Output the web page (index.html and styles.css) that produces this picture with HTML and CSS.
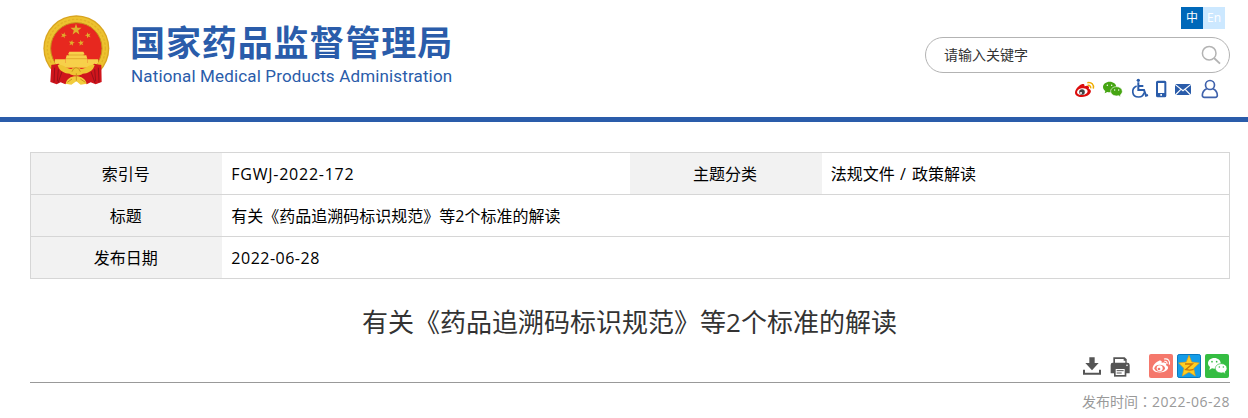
FILE: index.html
```html
<!DOCTYPE html>
<html lang="zh-CN">
<head>
    <meta charset="UTF-8">
    <meta name="viewport" content="width=device-width, initial-scale=1.0">
    <title>有关《药品追溯码标识规范》等2个标准的解读</title>
    <link rel="stylesheet" href="styles.css">
</head>
<body>
    <header class="header">
        <div class="logo">
            <svg class="emblem" viewBox="39 27 201 216">
                <defs>
                    <path id="star" d="M0-10L2.35-3.24 9.51-3.09 3.8 1.24 5.88 8.09 0 4-5.88 8.09-3.8 1.24-9.51-3.09-2.35-3.24z"/>
                </defs>
                <circle cx="139" cy="130" r="99" fill="#d9a520"/>
                <circle cx="139" cy="130" r="95" fill="#edc22f"/>
                <circle cx="139" cy="130" r="87" fill="none" stroke="#e2b226" stroke-width="4" stroke-dasharray="7 5"/>
                <circle cx="139" cy="130" r="77" fill="#e7281f" stroke="#c8921c" stroke-width="3"/>
                <g fill="#dfb02c">
                    <use href="#star" transform="translate(138 74) scale(1.75)"/>
                    <use href="#star" transform="translate(101 91) rotate(18) scale(.95)"/>
                    <use href="#star" transform="translate(174 91) rotate(-18) scale(.95)"/>
                    <use href="#star" transform="translate(125 114) rotate(10) scale(.95)"/>
                    <use href="#star" transform="translate(153 114) rotate(-10) scale(.95)"/>
                </g>
                <path d="M118 140h42l4 8h-3v3h8l3 11v12h31l-9 14H85l-10-14h32v-12l3-11h7v-3h-3z" fill="#f7d04a"/>
                <path d="M75 163h32v11H75zM172 163h32v11h-32z" fill="#f7d04a"/>
                <path d="M114 150h50M108 161h63" stroke="#d99a22" stroke-width="2"/>
                <path d="M64 180l22-4c8 14 24 19 52 19s46-5 54-19l22 4 1 51-18 7-15-6-12 6-20-20h-24l-20 20-14-6-12 6-19-7z" fill="#d0151c"/>
                <path d="M74 188l-2 44M85 193l-3 36M96 200l-12 34M205 188l2 44M194 193l3 36M183 200l12 34" stroke="#98101a" stroke-width="3"/>
                <path d="M83 180c18-4 29 15 42 12 5-6 22-6 27 0 13 3 24-16 42-12-4 18-22 26-36 26-5 7-34 7-39 0-14 0-32-8-36-26z" fill="#efc534"/>
                <path d="M107 236c3-14 15-22 31-22s29 8 32 22l-18 3-13-10-15 10z" fill="#f2cc3c"/>
                <path d="M126 200l5-9 7-3 8 3 5 9M112 232l14-10M166 232l-15-10M139 205v22" stroke="#cc921c" stroke-width="3" fill="none"/>
            </svg>
            <div class="logo-text">
                <div class="logo-cn">国家药品监督管理局</div>
                <div class="logo-en">National Medical Products Administration</div>
            </div>
        </div>

        <div class="tools">
            <div class="lang">
                <a class="lang-item active">中</a>
                <a class="lang-item">En</a>
            </div>
            <div class="search">
                <span>请输入关键字</span>
                <svg width="20" height="20" viewBox="0 0 20 20" fill="none" stroke="#b3b3b3">
                    <circle cx="8.2" cy="8.2" r="6.8" stroke-width="1.5"/>
                    <path d="M13 13l6 5.6" stroke-width="1.8"/>
                </svg>
            </div>
            <div class="links">
                <svg class="weibo" width="21" height="21" viewBox="462 234 63 63">
                    <path d="M485 253c6-3 10 0 8 6 9-4 17-1 13 7 9 3 8 11 2 17-10 10-34 11-41 1-7-9 6-26 18-31z" fill="#dc0d0d"/>
                    <ellipse cx="487" cy="275" rx="16" ry="10" transform="rotate(-8 487 275)" fill="#fff"/>
                    <circle cx="486" cy="276" r="8.500" fill="#444"/>
                    <circle cx="483" cy="279" r="3" fill="#fff"/>
                    <path d="M502 248c12-3 21 6 18 18M503 256c6-1 10 3 9 9" stroke="#f0ad00" stroke-width="4.500" fill="none"/>
                </svg>
                <svg class="wechat" width="21" height="21" viewBox="546 234 63 63">
                    <path d="M569 245c11 0 20 7 20 16s-9 16-20 16c-3 0-5 0-7-1l-8 4 2-7c-4-3-7-7-7-12 0-9 9-16 20-16z" fill="#46a512"/>
                    <path d="M590 260c-10 0-18 6-18 14s8 14 18 14l6-1 6 4-1-6c4-3 6-7 6-11 0-8-7-14-17-14z" fill="#46a512" stroke="#fff" stroke-width="2"/>
                    <g fill="#fff"><circle cx="562" cy="256" r="2.200"/><circle cx="575" cy="256" r="2.200"/><circle cx="584" cy="270" r="2"/><circle cx="596" cy="270" r="2"/></g>
                </svg>
                <svg class="wheelchair" width="18" height="21" viewBox="633 234 54 63" fill="none" stroke="#2a5caa" stroke-width="6">
                    <circle cx="655" cy="241" r="5" fill="#2a5caa" stroke="none"/>
                    <path d="M655 247v23h17l6 17 6-2M655 258h15"/>
                    <path d="M650 258c-17 7-16 33 6 33 9 0 15-6 16-13" stroke-width="5"/>
                </svg>
                <svg class="phone" width="12" height="21" viewBox="705 234 36 63">
                    <path fill="#2a5caa" fill-rule="evenodd" d="M713 242h21q5 0 5 5v40q0 5-5 5h-21q-5 0-5-5v-40q0-5 5-5zm1 7v30h19v-30zm7 33v5h5v-5z"/>
                </svg>
                <svg class="mail" width="18" height="21" viewBox="762 234 54 63">
                    <path d="M765 252h48v33h-48z" fill="#2a5caa"/>
                    <path d="M765 253l24 19 24-19M766 285l16-16M812 285l-16-16" stroke="#fff" stroke-width="3.500" fill="none"/>
                </svg>
                <svg class="user" width="18" height="21" viewBox="843 234 54 63" fill="none" stroke="#3f62ac" stroke-width="5">
                    <circle cx="870" cy="255" r="13.500"/>
                    <path d="M860 266c-8 4-13 11-13 20q0 6 6 6h33q6 0 6-6c0-9-5-16-13-20"/>
                </svg>
            </div>
        </div>
    </header>

    <main class="container">
        <table class="info">
            <tr>
                <th>索引号</th>
                <td class="code">FGWJ-2022-172</td>
                <th>主题分类</th>
                <td>法规文件<span class="slash"> / </span>政策解读</td>
            </tr>
            <tr>
                <th>标题</th>
                <td colspan="3">有关《药品追溯码标识规范》等2个标准的解读</td>
            </tr>
            <tr>
                <th>发布日期</th>
                <td colspan="3" class="num">2022-06-28</td>
            </tr>
        </table>

        <h1>有关《药品追溯码标识规范》等2个标准的解读</h1>

        <div class="share">
            <svg class="download" width="20" height="24" viewBox="36 27 60 72" fill="#555">
                <path d="M58 37h16v17h12L66 76 46 54h12z"/>
                <path d="M39 74h6v9h42v-9h6v15H39z"/>
            </svg>
            <svg class="print" width="20" height="24" viewBox="121 27 60 72">
                <path d="M131 37h34l6 6v11h-40z" fill="#555"/>
                <path d="M136 42h26v5h5v9h-31z" fill="#fff"/>
                <path d="M129 53h44q7 0 7 7v25h-11V72h-36v13h-10V60q0-7 6-7z" fill="#555"/>
                <path d="M133 69h37v26h-37z" fill="#555"/>
                <path d="M138 72h27v18h-27z" fill="#fff"/>
                <path d="M141 77h21M141 84h15" stroke="#555" stroke-width="3"/>
                <circle cx="172" cy="61" r="2.500" fill="#fff"/>
            </svg>
            <svg class="share-weibo" width="24" height="24" viewBox="237 27 72 72">
                <rect x="237" y="27" width="72" height="72" rx="6" fill="#f5786c"/>
                <path d="M266 48c6-3 11 0 9 6 9-3 16 0 13 7 8 3 8 10 2 15-10 9-33 9-40 0-7-8 4-23 16-28z" fill="#fff"/>
                <ellipse cx="269" cy="70" rx="16" ry="10.500" fill="#f5786c"/>
                <circle cx="269" cy="70" r="9" fill="#fff"/>
                <circle cx="267" cy="72" r="4" fill="#f5786c"/>
                <path d="M282 42c12-3 19 6 16 17M283 49c6-1 9 3 8 8" stroke="#fff" stroke-width="3.500" fill="none"/>
            </svg>
            <svg class="share-qzone" width="24" height="24" viewBox="321 27 72 72">
                <rect x="322.500" y="28.500" width="69" height="69" rx="5" fill="#159de8" stroke="#0878be" stroke-width="3"/>
                <path d="M357 31l8 20 23 3-17 16 5 23-19-12-20 12 5-23-16-16 23-3z" fill="#ffce22" stroke="#e8a012" stroke-width="2"/>
                <path d="M345 57h22l-20 17c9 2 16 2 24-1" stroke="#ca7608" stroke-width="4" fill="none"/>
            </svg>
            <svg class="share-wechat" width="24" height="24" viewBox="405 27 72 72">
                <rect x="405" y="27" width="72" height="72" rx="6" fill="#35bd42"/>
                <path d="M433 39c11 0 19 7 19 16s-8 16-19 16l-7-1-8 5 2-9c-4-3-6-7-6-11 0-9 8-16 19-16z" fill="#fff"/>
                <path d="M454 56c-10 0-18 6-18 14s8 14 18 14l6-1 7 4-2-6c4-3 6-7 6-11 0-8-7-14-17-14z" fill="#fff" stroke="#35bd42" stroke-width="2"/>
                <g fill="#35bd42"><circle cx="426" cy="50" r="2.500"/><circle cx="440" cy="50" r="2.500"/><circle cx="448" cy="66" r="2.300"/><circle cx="460" cy="66" r="2.300"/></g>
            </svg>
        </div>
        <div class="date">发布时间<span class="colon" lang="zh-TW">：</span><span class="num">2022-06-28</span></div>
    </main>
</body>
</html>
```
FILE: styles.css
```css
body {
    margin: 0;
    background-color: #fff;
    color: #000;
    font-family: "Open Sans", "Noto Sans CJK SC", sans-serif;
    font-size: 16px;
}
svg {
    display: block;
    flex: none;
}
.header {
    display: flex;
    justify-content: space-between;
    height: 117px;
    padding: 0 18px 0 43px;
    border-bottom: 5px solid #2a5caa;
}
.logo {
    display: flex;
    padding-top: 14px;
}
.emblem {
    width: 67px;
    height: 72px;
}
.logo-text {
    margin-left: 20px;
    color: #2a5caa;
    white-space: nowrap;
}
.logo-cn {
    height: 48px;
    line-height: 54px;
    font-family: "Noto Sans CJK SC", sans-serif;
    font-size: 35px;
    font-weight: 700;
    letter-spacing: 0.9px;
}
.logo-en {
    padding-left: 1px;
    line-height: 28px;
    font-family: Roboto, sans-serif;
    font-size: 17px;
    letter-spacing: 0.15px;
}
.tools {
    display: flex;
    flex-direction: column;
    align-items: flex-end;
    padding-top: 7px;
}
.lang {
    display: flex;
    margin-right: 5px;
}
.lang-item {
    width: 22px;
    height: 22px;
    line-height: 22px;
    background-color: #cce8ff;
    color: #fff;
    font-size: 12px;
    text-align: center;
}
.lang-item.active {
    background-color: #0068b9;
}
.search {
    display: flex;
    align-items: center;
    justify-content: space-between;
    box-sizing: border-box;
    width: 305px;
    height: 36px;
    margin-top: 8px;
    padding: 0 8px 0 18px;
    border: 1px solid #b3b3b3;
    border-radius: 18px;
    color: #333;
    font-size: 14px;
}
.search span {
    padding-bottom: 2px;
}
.links {
    display: flex;
    margin: 5px 11px 0 0;
}
.wechat {
    margin-left: 7px;
}
.wheelchair {
    margin-left: 8px;
}
.phone {
    margin-left: 6px;
}
.mail {
    margin-left: 7px;
}
.user {
    margin-left: 9px;
}
.container {
    width: 1200px;
    margin: 30px 18px 0 30px;
}
.info {
    width: 100%;
    table-layout: fixed;
    border-collapse: collapse;
    border: 1px solid #d6d6d6;
}
.info tr {
    height: 42px;
    border-bottom: 1px solid #d6d6d6;
}
.info th,
.info td {
    box-sizing: border-box;
    padding: 0;
    line-height: 24px;
}
.info th {
    width: 16%;
    padding-right: 2px;
    background-color: #f2f2f2;
    font-weight: 400;
}
.info td {
    padding-left: 9px;
}
.info .code {
    letter-spacing: 0.75px;
}
.num {
    letter-spacing: 0.5px;
}
.slash {
    letter-spacing: 1px;
}
h1 {
    margin: 23px 0 0;
    padding-right: 1px;
    color: #333;
    font-size: 26px;
    font-weight: 400;
    line-height: 40px;
    text-align: center;
}
.share {
    display: flex;
    justify-content: flex-end;
    height: 28px;
    margin-top: 12px;
    padding-right: 1px;
    border-bottom: 1px solid #999;
}
.print {
    margin-left: 8px;
}
.share-weibo {
    margin-left: 19px;
}
.share-qzone,
.share-wechat {
    margin-left: 4px;
}
.date {
    margin-top: 7px;
    color: #999;
    font-size: 14px;
    line-height: 22px;
    text-align: right;
}
.colon {
    font-family: "Noto Sans CJK TC", sans-serif;
}
```
